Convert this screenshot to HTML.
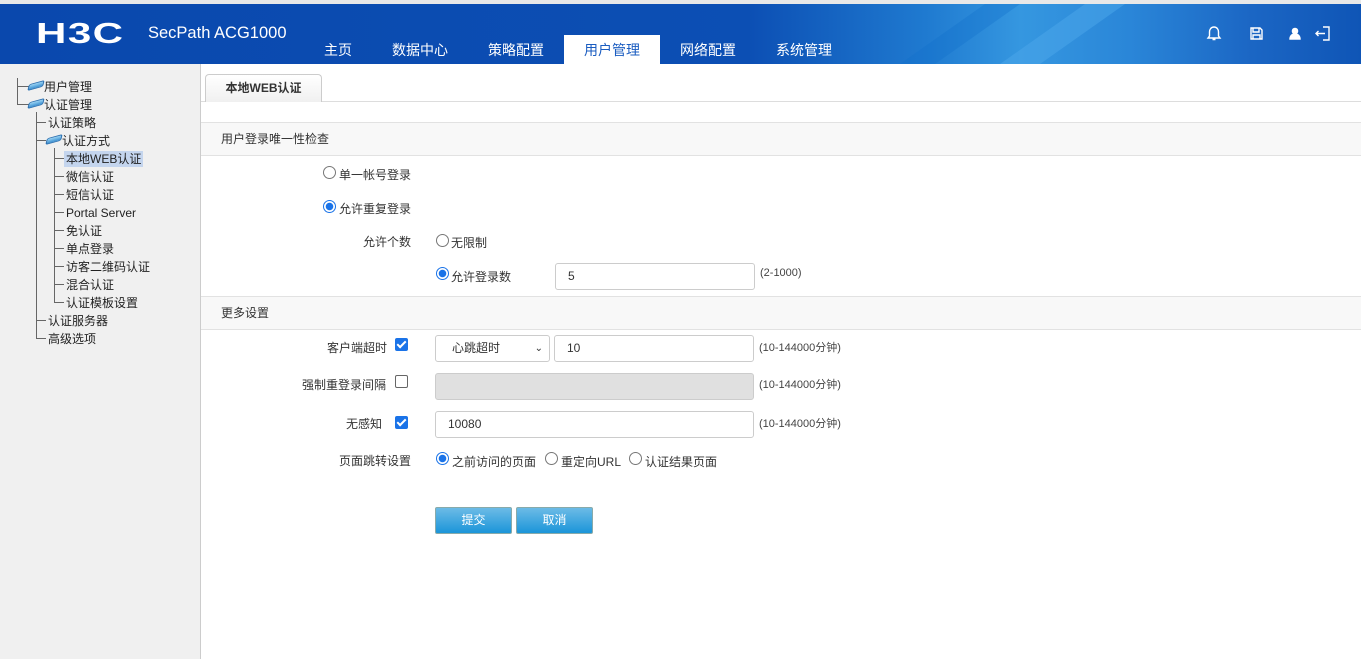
<!DOCTYPE html>
<html><head><meta charset="utf-8"><style>
*{margin:0;padding:0;box-sizing:border-box}
body{width:1361px;height:659px;overflow:hidden;background:#fff;font-family:"Liberation Sans","Noto Sans CJK SC",sans-serif;font-size:12px;color:#333;position:relative}
.top{position:absolute;left:0;top:0;width:1361px;height:4px;background:#e8e8e8}
.hdr{position:absolute;left:0;top:4px;width:1361px;height:60px;background:linear-gradient(90deg,#0a48ad 0%,#0c4fb4 55%,#1f7ad0 68%,#3597e0 75%,#2a86d8 83%,#1b66c4 92%,#0f55b6 100%);overflow:hidden}
.nav{position:absolute;top:31px;height:29px;line-height:31px;font-size:14px;color:#fff;text-align:center}
.nav.on{background:#fff;color:#1a5cc0}
.side{position:absolute;left:0;top:64px;width:201px;height:595px;background:#f0f0f0;border-right:1px solid #ccc}
.t{position:absolute;font-size:12px;color:#222;white-space:nowrap;line-height:16px}
.vl{position:absolute;width:1px;background:#666}
.hl{position:absolute;height:1px;background:#666}
.ic{position:absolute;width:14px;height:7px;background:linear-gradient(#9ad4f4,#3b8fd0);border:1px solid #2a6fb0;transform:skewX(-30deg) rotate(-18deg);border-radius:2px}
.abs{position:absolute}
.lbl{position:absolute;font-size:12px;color:#333;white-space:nowrap}
.rad{position:absolute;width:13px;height:13px;border-radius:50%;border:1px solid #777;background:#fff}
.rad.on{border:1px solid #1a73e8;background:radial-gradient(circle,#1a73e8 0 3.5px,#fff 4px)}
.cb{position:absolute;width:13px;height:13px;border-radius:2px;background:#1a73e8}
.cb:after{content:"";position:absolute;left:4px;top:1px;width:3px;height:7px;border:solid #fff;border-width:0 2px 2px 0;transform:rotate(45deg)}
.cb.off{background:#fff;border:1px solid #666}
.cb.off:after{display:none}
.inp{position:absolute;height:27px;border:1px solid #ccc;border-radius:3px;background:#fff;font-size:12px;line-height:25px;padding-left:12px;color:#333}
.sec{position:absolute;left:201px;width:1160px;height:34px;background:#f8f8f8;border-top:1px solid #e2e2e2;border-bottom:1px solid #e2e2e2;line-height:32px;padding-left:20px;font-size:12px;color:#333}
.btn{position:absolute;top:507px;width:77px;height:27px;border:1px solid #8aa;border-radius:2px;background:linear-gradient(#6cbbe6,#1b95d9);color:#fff;text-align:center;line-height:25px;font-size:12px}
.hint{position:absolute;font-size:11px;color:#444}
</style></head><body>
<div class="top"></div>
<div class="hdr">
<svg width="1361" height="60" style="position:absolute;left:0;top:0">
<polygon points="1000,60 1040,60 1125,0 1085,0" fill="#4aa6ea" opacity=".55"/>
<polygon points="900,60 935,60 1020,0 985,0" fill="#1070cc" opacity=".35"/>
</svg>
<div class="abs" style="left:36px;top:14px;font:bold 29px 'Liberation Sans',sans-serif;color:#fff;letter-spacing:1px;transform:scaleX(1.45);transform-origin:left">H3C</div>
<div class="abs" style="left:148px;top:20px;font-size:16.5px;color:#fff">SecPath ACG1000</div>
<div class="nav" style="left:310px;width:56px">主页</div>
<div class="nav" style="left:380px;width:80px">数据中心</div>
<div class="nav" style="left:476px;width:80px">策略配置</div>
<div class="nav on" style="left:564px;width:96px">用户管理</div>
<div class="nav" style="left:668px;width:80px">网络配置</div>
<div class="nav" style="left:764px;width:80px">系统管理</div>
<svg class="abs" style="left:1205px;top:20px" width="135" height="20" fill="none" stroke="#fff" stroke-width="1.4">
<path d="M9 3c-3 0-4.5 2.5-4.5 5v4l-1.5 2h12l-1.5-2V8c0-2.5-1.5-5-4.5-5zM7.5 15.5h3"/>
<path d="M46 4h9l2 2v9H46zM48 4v4h6V4M48 15v-4h7v4"/>
<circle cx="90" cy="7" r="2.6" fill="#fff"/><path d="M85 15c0-3 2-5 5-5s5 2 5 5z" fill="#fff"/>
<path d="M118 3h6v13h-6M111 9.5h9M113.5 7l-2.5 2.5 2.5 2.5"/>
</svg>
</div>
<div class="side">
<div class="vl" style="left:17px;top:14px;height:26px"></div>
<div class="hl" style="left:17px;top:22px;width:12px"></div>
<div class="hl" style="left:17px;top:40px;width:12px"></div>
<div class="ic" style="left:29px;top:18px"></div><div class="t" style="left:44px;top:15px">用户管理</div>
<div class="ic" style="left:29px;top:36px"></div><div class="t" style="left:44px;top:33px">认证管理</div>
<div class="vl" style="left:36px;top:48px;height:226px"></div>
<div class="hl" style="left:36px;top:58px;width:10px"></div><div class="t" style="left:48px;top:51px">认证策略</div>
<div class="hl" style="left:36px;top:76px;width:10px"></div><div class="ic" style="left:47px;top:72px"></div><div class="t" style="left:62px;top:69px">认证方式</div>
<div class="vl" style="left:54px;top:84px;height:154px"></div>
<div class="hl" style="left:54px;top:94px;width:10px"></div><div class="t" style="left:64px;top:87px;background:#c4d5ee;padding:0 2px">本地WEB认证</div>
<div class="hl" style="left:54px;top:112px;width:10px"></div><div class="t" style="left:66px;top:105px">微信认证</div>
<div class="hl" style="left:54px;top:130px;width:10px"></div><div class="t" style="left:66px;top:123px">短信认证</div>
<div class="hl" style="left:54px;top:148px;width:10px"></div><div class="t" style="left:66px;top:141px">Portal Server</div>
<div class="hl" style="left:54px;top:166px;width:10px"></div><div class="t" style="left:66px;top:159px">免认证</div>
<div class="hl" style="left:54px;top:184px;width:10px"></div><div class="t" style="left:66px;top:177px">单点登录</div>
<div class="hl" style="left:54px;top:202px;width:10px"></div><div class="t" style="left:66px;top:195px">访客二维码认证</div>
<div class="hl" style="left:54px;top:220px;width:10px"></div><div class="t" style="left:66px;top:213px">混合认证</div>
<div class="hl" style="left:54px;top:238px;width:10px"></div><div class="t" style="left:66px;top:231px">认证模板设置</div>
<div class="hl" style="left:36px;top:256px;width:10px"></div><div class="t" style="left:48px;top:249px">认证服务器</div>
<div class="hl" style="left:36px;top:274px;width:10px"></div><div class="t" style="left:48px;top:267px">高级选项</div>
</div>
<div class="abs" style="left:201px;top:101px;width:1160px;height:1px;background:#ddd"></div>
<div class="abs" style="left:205px;top:74px;width:117px;height:28px;border:1px solid #ccc;border-bottom:none;border-radius:4px 4px 0 0;background:linear-gradient(#fff,#f0f0f0);text-align:center;line-height:27px;font-weight:bold;font-size:12px;color:#333">本地WEB认证</div>
<div class="sec" style="top:122px">用户登录唯一性检查</div>
<div class="rad" style="left:323px;top:166px"></div><div class="lbl" style="left:339px;top:166px">单一帐号登录</div>
<div class="rad on" style="left:323px;top:200px"></div><div class="lbl" style="left:339px;top:200px">允许重复登录</div>
<div class="lbl" style="left:363px;top:233px">允许个数</div>
<div class="rad" style="left:436px;top:234px"></div><div class="lbl" style="left:451px;top:234px">无限制</div>
<div class="rad on" style="left:436px;top:267px"></div><div class="lbl" style="left:451px;top:268px">允许登录数</div>
<div class="inp" style="left:555px;top:263px;width:200px">5</div>
<div class="hint" style="left:760px;top:267px">(2-1000)</div>
<div class="sec" style="top:296px">更多设置</div>
<div class="lbl" style="left:327px;top:339px">客户端超时</div><div class="cb" style="left:395px;top:338px"></div>
<div class="inp" style="left:435px;top:335px;width:115px;padding-left:16px">心跳超时<span style="position:absolute;right:6px;top:0;font-size:10px">&#8964;</span></div>
<div class="inp" style="left:554px;top:335px;width:200px">10</div>
<div class="hint" style="left:759px;top:339px">(10-144000分钟)</div>
<div class="lbl" style="left:302px;top:376px">强制重登录间隔</div><div class="cb off" style="left:395px;top:375px"></div>
<div class="inp" style="left:435px;top:373px;width:319px;background:#e0e0e0"></div>
<div class="hint" style="left:759px;top:376px">(10-144000分钟)</div>
<div class="lbl" style="left:346px;top:415px">无感知</div><div class="cb" style="left:395px;top:416px"></div>
<div class="inp" style="left:435px;top:411px;width:319px">10080</div>
<div class="hint" style="left:759px;top:415px">(10-144000分钟)</div>
<div class="lbl" style="left:339px;top:452px">页面跳转设置</div>
<div class="rad on" style="left:436px;top:452px"></div><div class="lbl" style="left:452px;top:453px">之前访问的页面</div>
<div class="rad" style="left:545px;top:452px"></div><div class="lbl" style="left:561px;top:453px">重定向URL</div>
<div class="rad" style="left:629px;top:452px"></div><div class="lbl" style="left:645px;top:453px">认证结果页面</div>
<div class="btn" style="left:435px">提交</div>
<div class="btn" style="left:516px">取消</div>
</body></html>
